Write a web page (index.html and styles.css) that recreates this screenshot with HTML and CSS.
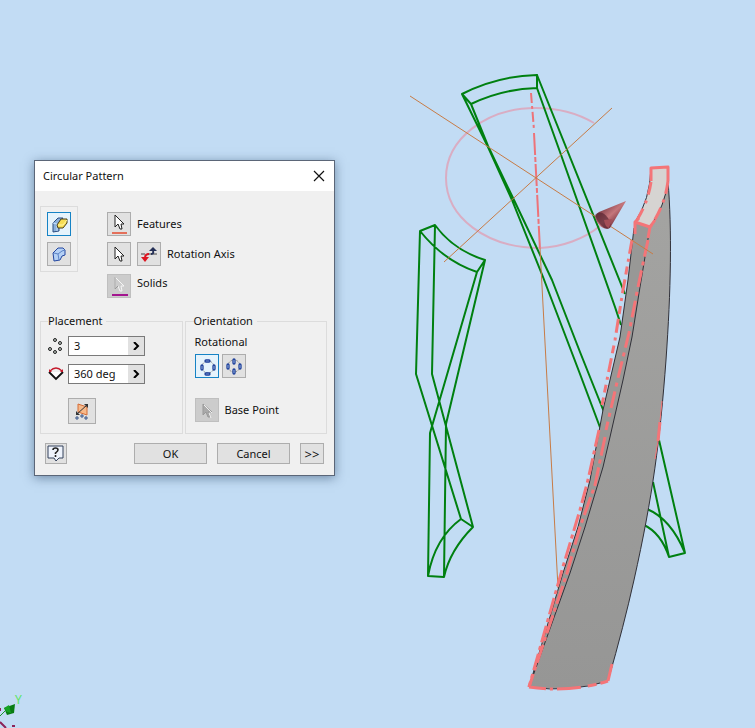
FILE: index.html
```html
<!DOCTYPE html>
<html lang="en">
<head>
<meta charset="utf-8">
<title>Circular Pattern</title>
<link rel="stylesheet" href="styles.css">
</head>
<body>
<main class="viewport">
  <svg class="scene" viewBox="0 0 755 728" preserveAspectRatio="xMinYMin meet" aria-hidden="true">
    <defs>
      <linearGradient id="steel" x1="0" y1="0" x2="0" y2="1"><stop offset="0" stop-color="#a4a4a2"/><stop offset="1" stop-color="#969695"/></linearGradient>
      <linearGradient id="cone" x1="0" y1="0" x2="1" y2="1"><stop offset="0.2" stop-color="#7c3a45"/><stop offset="0.5" stop-color="#c5767b"/><stop offset="0.8" stop-color="#6b2633"/></linearGradient>
    </defs>
    <path class="ring" d="M594 123C577 113 557 108 536 108C486 108 446 139 446 178S486 248 540 248C562 247 584 239 600 226"/>
    <g class="wire">
      <path d="M462 94Q497 76 537 75V88Q502 89 471 104ZM462 94L488 147L512 200L543 277L580 374L601 430M471 104L488 146L514 200L552 280L580 352L604 412M537 75L625 294M537 88L560 152L615 307L621 325"/>
      <path d="M420 231L435 225Q453 250 485 260L477 272Q444 261 420 231L416 374L461 519L473 527L432 374L435 225M485 260L446 424L444 577L428 576L430 433L477 272M461 519Q435 538 428 576M473 527Q450 550 444 577"/>
      <path d="M659 440L685 553L669 557L653 482M647 509Q671 519 685 553M644 525Q661 533 669 557"/>
    </g>
    <path class="axis" d="M540 248L558 588"/>
    <path class="select-thin" d="M531 93L534 130" stroke-dasharray="10 3 3 3"/>
    <path class="select-thin" d="M534 133L540 250" stroke-dasharray="22 2 5 2"/>
    <path fill="url(#steel)" d="M635 222L650 227L660 211L668 180C672 230 671 290 666 360C660 440 653 495 634 580Q624 625 608 681Q570 692 529 687L563 573L578 527L590 480L603 410L620 337L628 280Z"/>
    <path class="rib" d="M635 222L650 227L640 287L632 337L623 380L610 437L603 467L585 527L570 573L529 687L563 573L578 527L590 480L603 410L620 337L628 280Z"/>
    <path fill="#d6d4d2" d="M651 168L668 167V181Q665 206 650 227L635 222Q650 200 651 168Z"/>
    <g class="edge">
      <path d="M668 181C672 230 671 290 666 360C660 440 653 495 634 580Q624 625 608 681"/>
      <path d="M634 228L628 280L620 337L603 410L590 480L578 527L563 573L529 687"/>
      <path d="M650 227L640 287L632 337L623 380L610 437L603 467L585 527L570 573L529 687"/>
      <path d="M529 687Q570 693 608 681M651 168Q650 200 635 222M668 181Q665 206 650 227"/>
    </g>
    <g class="select">
      <path d="M651 181V168L668 167V181M639 218L635 222V234M635 222L650 227L655 220M650 227L648 238"/>
      <path d="M651 182Q648 202 637 220M668 181Q665 206 650 227" stroke-dasharray="13 6 3 6"/>
      <path d="M632 240L623 290L615 340L602 405" stroke-dasharray="14 5 3 5 8 5"/>
      <path d="M599 430L588 480L580 510L562 570L529 687" stroke-dasharray="17 4 4 4"/>
      <path d="M648 240L638 287L629 333L618 378L606 430" stroke-dasharray="17 5 4 5"/>
      <path d="M605 437L595 485L580 527L567 573L529 687" stroke-dasharray="19 4 4 4"/>
      <path d="M529 687Q570 693 608 681" stroke-dasharray="17 4 3 4 24 7 9 4"/>
      <path d="M608 681L612 664M660 422L658 441"/>
      <path class="thin" d="M662 401L660 421M658 441L655 459"/>
    </g>
    <path class="axis" d="M410 96L653 254M612 108L444 262"/>
    <path fill="url(#cone)" d="M626 201L599 212Q593 216 597 222Q603 231 610 228Z"/>
    <path fill="#51212e" d="M595 215Q601 209 608 218Q613 226 608 229Q600 228 595 215Z" opacity=".65"/>
    <path fill="#a44e57" d="M604 220L612 219L609 228Q605 227 604 220Z"/>
    <path class="triad-y" d="M0 716L5 711"/>
    <path fill="#087c13" d="M4 708L15 704L14 713L7 715Z"/>
    <path fill="#14a323" d="M4 708L9 705L11 713L7 712Z"/>
    <path class="triad-x" d="M0 722L6 728M12 726H15M0 708V711"/>
    <text class="triad-label" x="15" y="704">Y</text>
  </svg>

  <section class="dialog" role="dialog" aria-labelledby="dialog-title">
    <header class="titlebar">
      <h1 id="dialog-title">Circular Pattern</h1>
      <button class="close" type="button" aria-label="Close">
        <svg width="12" height="12" viewBox="0 0 12 12"><path d="M1 1L11 11M11 1L1 11" stroke="#111" stroke-width="1.2"/></svg>
      </button>
    </header>
    <form class="body">
      <div class="selectors">
        <div class="modes">
          <button class="tool active" type="button" aria-label="Pattern individual features" aria-pressed="true">
            <svg width="20" height="20" viewBox="0 0 20 20"><path d="M4 9L9 4H14L10 9V17L4 18Z" fill="#8ab0dc" stroke="#2b4c80"/><path d="M4 9L8 10V17" fill="none" stroke="#c7e0fa"/><path d="M8 11L12 5H18V9L14 14H9Z" fill="#f6dd54" stroke="#493e18"/><path d="M9 11H14L18 6" fill="none" stroke="#fff7a4"/></svg>
          </button>
          <button class="tool" type="button" aria-label="Pattern a solid" aria-pressed="false">
            <svg width="20" height="20" viewBox="0 0 20 20"><path d="M4 9L9 4H14L16 6V11L13 12L11 16L5 17Z" fill="#b4d0f5" stroke="#2447a0"/><path d="M5 9L9 10L10 16M9 10L13 7L16 6" fill="none" stroke="#5b82c5"/></svg>
          </button>
        </div>
        <div class="picks">
          <div class="row">
            <button class="tool" id="features" type="button">
              <svg width="20" height="22" viewBox="0 0 20 22"><path d="M6 2V14L9 11L11 16H13L12 11H15Z" fill="#fff" stroke="#222"/><path d="M3 20H18" stroke="#e4705b" stroke-width="2"/></svg>
            </button>
            <label for="features">Features</label>
          </div>
          <div class="row">
            <button class="tool" id="axis" type="button">
              <svg width="20" height="20" viewBox="0 0 20 20"><path d="M6 3V15L9 12L11 17H13L12 12H15Z" fill="#fff" stroke="#222"/></svg>
            </button>
            <button class="tool" type="button" aria-label="Flip direction">
              <svg width="20" height="20" viewBox="0 0 20 20"><path d="M2 10H18" stroke="#444" stroke-dasharray="4 2"/><path d="M12 10Q15 10 14 7" fill="none" stroke="#253057" stroke-width="2"/><path d="M10 7L14 3L18 7Z" fill="#253057"/><path d="M10 10Q6 10 6 14" fill="none" stroke="#dc1622" stroke-width="2"/><path d="M2 13H10L6 18Z" fill="#dc1622"/></svg>
            </button>
            <label for="axis">Rotation Axis</label>
          </div>
          <div class="row solids">
            <button class="tool" id="solids" type="button" disabled>
              <svg width="20" height="22" viewBox="0 0 20 22"><path d="M6 2V14L9 11L11 16H13L12 11H15Z" fill="#ccc" stroke="#f5f5f5"/><path d="M6 2V14L9 11" fill="none" stroke="#999"/><path d="M3 20H19" stroke="#a3168f" stroke-width="2"/></svg>
            </button>
            <label for="solids">Solids</label>
          </div>
        </div>
      </div>

      <div class="groups">
        <fieldset>
          <legend>Placement</legend>
          <div class="entry">
            <svg width="16" height="16" viewBox="0 0 16 16" fill="#b9c2bd" stroke="#222"><circle cx="7" cy="2" r="1.5"/><circle cx="12" cy="5" r="1.5"/><circle cx="12" cy="11" r="1.5"/><circle cx="7" cy="14" r="1.5"/><circle cx="2" cy="11" r="1.5"/></svg>
            <div class="combo">
              <input type="text" value="3" aria-label="Occurrence count">
              <button type="button" aria-label="Count options"><svg width="8" height="8" viewBox="0 0 8 8"><path d="M2 0L6 4L2 8" fill="none" stroke="#000" stroke-width="2"/></svg></button>
            </div>
          </div>
          <div class="entry">
            <svg width="16" height="16" viewBox="0 0 16 16" fill="none"><path d="M1 6L8 13L15 6" fill="#fff" stroke="#111" stroke-width="1.8"/><path d="M2 5Q8 -1 14 5" stroke="#c4192b" stroke-width="1.2"/><path d="M1 3V6H4ZM15 3V6H12Z" fill="#c4192b"/></svg>
            <div class="combo">
              <input type="text" value="360 deg" aria-label="Occurrence angle">
              <button type="button" aria-label="Angle options"><svg width="8" height="8" viewBox="0 0 8 8"><path d="M2 0L6 4L2 8" fill="none" stroke="#000" stroke-width="2"/></svg></button>
            </div>
          </div>
          <button class="tool midplane" type="button" aria-label="Midplane">
            <svg width="20" height="20" viewBox="0 0 20 20"><path d="M6 3L15 6V14L6 11Z" fill="#f7b98a" stroke="#d46c37"/><path d="M5 13L15 4" stroke="#333"/><path d="M16 3V7L12 3ZM4 14V10L8 14Z" fill="#333"/><g fill="#a9c2e9" stroke="#38517f"><circle cx="5" cy="17" r="1.2"/><circle cx="10" cy="15" r="1.2"/><circle cx="14" cy="17" r="1.2"/></g></svg>
          </button>
        </fieldset>
        <fieldset class="orientation">
          <legend>Orientation</legend>
          <span class="caption">Rotational</span>
          <div class="pair">
            <button class="tool active" type="button" aria-label="Rotational" aria-pressed="true">
              <svg width="20" height="20" viewBox="0 0 20 20"><circle cx="11" cy="11" r="6" fill="none" stroke="#888" stroke-dasharray="2 1"/><g fill="#cde4ff" stroke="#1b3d99" stroke-width="1.3"><rect x="8" y="4" width="5" height="2" rx="1"/><rect x="8" y="17" width="5" height="2" rx="1"/><rect x="4" y="9" width="2" height="5" rx="1"/><rect x="16" y="9" width="2" height="5" rx="1"/></g></svg>
            </button>
            <button class="tool" type="button" aria-label="Fixed" aria-pressed="false">
              <svg width="20" height="20" viewBox="0 0 20 20"><circle cx="10" cy="10" r="6" fill="none" stroke="#888" stroke-dasharray="2 1"/><g fill="#cde4ff" stroke="#1b3d99" stroke-width="1.3"><rect x="9" y="3" width="2" height="5" rx="1"/><rect x="9" y="13" width="2" height="5" rx="1"/><rect x="3" y="8" width="2" height="5" rx="1"/><rect x="15" y="8" width="2" height="5" rx="1"/></g></svg>
            </button>
          </div>
          <div class="row base">
            <button class="tool" id="base" type="button" disabled>
              <svg width="20" height="20" viewBox="0 0 20 20"><path d="M6 4V15L9 12L11 17H13L11 12H15Z" fill="#aaa" stroke="#999"/><path d="M7 5L15 13M12 13L14 18" stroke="#eee"/></svg>
            </button>
            <label for="base">Base Point</label>
          </div>
        </fieldset>
      </div>

      <footer class="actions">
        <button class="help" type="button" aria-label="Help">
          <svg width="18" height="18" viewBox="0 0 18 18"><path d="M1 1H16V13H12L9 16L7 13H1Z" fill="#eef3fc" stroke="#34435d"/><path d="M6 5Q6 3 8.500 3T11 5Q11 6 8.500 8V9M8.500 10V12" fill="none" stroke="#222" stroke-width="1.6"/></svg>
        </button>
        <button class="ok" type="button">OK</button>
        <button class="cancel" type="button">Cancel</button>
        <button class="more" type="button">&gt;&gt;</button>
      </footer>
    </form>
  </section>
</main>
</body>
</html>
```
FILE: styles.css
```css
* { box-sizing: border-box; }
body { margin: 0; background: #c2dcf4; }
.viewport { position: relative; min-height: 100vh; overflow: hidden; font: 11px/14px "Noto Sans", "Open Sans", sans-serif; color: #111; }
.scene { position: absolute; top: 0; left: 0; width: 100%; }
.wire { fill: none; stroke: #008010; stroke-width: 2; stroke-linejoin: round; }
.ring { fill: none; stroke: #d9adc3; stroke-width: 2; }
.axis { fill: none; stroke: #c77b45; stroke-width: 1; }
.select { fill: none; stroke: #f47578; stroke-width: 3; stroke-linejoin: round; }
.select .thin { stroke-width: 1; }
.select-thin { fill: none; stroke: #ed7379; stroke-width: 2; }
.edge { fill: none; stroke: #303038; stroke-width: 1; }
.rib { fill: #989896; }
.triad-y { stroke: #18962c; }
.triad-x { stroke: #8d2458; stroke-width: 2; }
.triad-label { font-size: 12px; fill: #5be465; }

.dialog { position: absolute; top: 160px; left: 34px; width: 301px; background: #f0f0f0; border: 1px solid #5b6678; box-shadow: 0 2px 10px rgba(30, 55, 90, .5); }
.titlebar { display: flex; align-items: center; justify-content: space-between; height: 30px; padding: 0 9px 0 8px; background: #fff; }
.titlebar h1 { margin: 0; font-size: 11px; font-weight: 400; }
button { font: inherit; color: inherit; padding: 0; border: 1px solid #adadad; border-radius: 0; background: #e1e1e1; }
button svg { display: block; flex: none; }
.close { border: 0; background: none; }
.body { padding: 15px 7px 11px 5px; }

.tool { display: flex; align-items: center; justify-content: center; width: 24px; height: 24px; flex: none; }
.tool.active { border-color: #1683c5; background: #e5f3fc; }
.tool:disabled { background: #cccccc; border-color: #bfbfbf; }
.selectors { display: flex; align-items: flex-start; gap: 29px; }
.modes { display: grid; gap: 6px; padding: 5px 6px; border: 1px solid #dcdcdc; }
.picks { display: grid; gap: 6px; padding-top: 6px; }
.row { display: flex; align-items: center; gap: 6px; }
.row label { line-height: 18px; }
.solids { align-items: flex-start; padding-top: 2px; }

.groups { display: grid; grid-template-columns: 1fr 1fr; gap: 2px; margin-top: 16px; }
fieldset { min-width: 0; margin: 0; padding: 8px 7px 9px; border: 1px solid #dcdcdc; }
legend { padding: 0 4px 0 0; }
.orientation { padding: 0 9px 8px; }
.orientation legend { margin-left: -1px; }
.entry { display: flex; align-items: center; gap: 4px; margin-bottom: 8px; }
.combo { display: flex; width: 77px; height: 20px; border: 1px solid #7a7a7a; background: #fff; }
.combo input { flex: 1; min-width: 0; padding: 0 5px; border: 0; background: none; font: inherit; color: inherit; }
.combo button { display: flex; align-items: center; justify-content: center; width: 16px; border: 0; }
.midplane { width: 28px; height: 26px; margin: 14px 0 0 20px; }
.caption { display: block; margin: 7px 0 5px; }
.pair { display: flex; gap: 3px; }
.base { margin-top: 20px; }

.actions { display: flex; align-items: center; margin: 9px 3px 0 5px; }
.actions button { display: flex; align-items: center; justify-content: center; height: 21px; }
.help { width: 22px; margin-right: auto; }
.ok, .cancel { width: 73px; margin-right: 10px; }
.actions .more { width: 24px; font-size: 13px; }
```
